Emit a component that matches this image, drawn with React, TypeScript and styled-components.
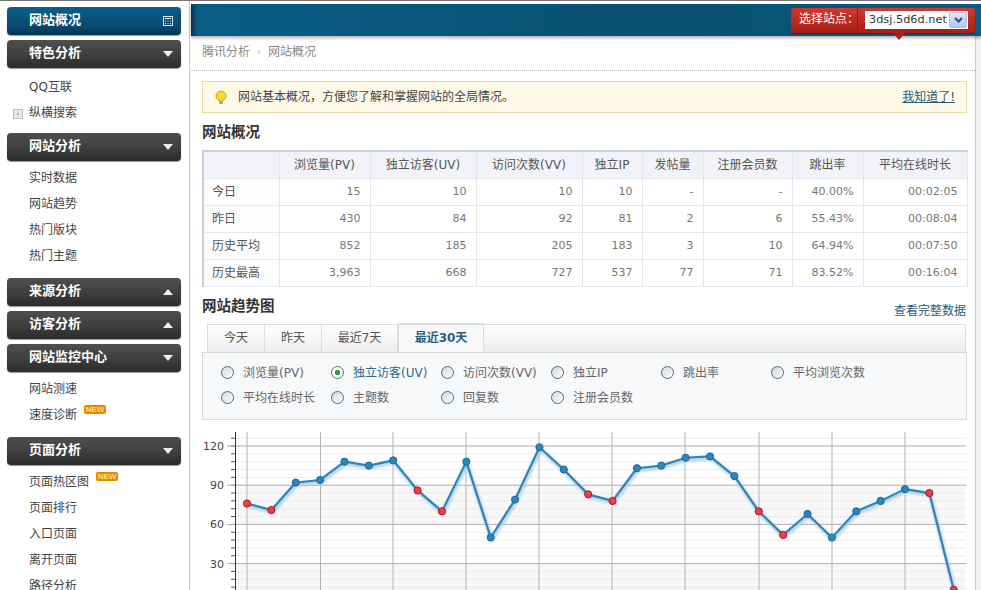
import React from "react";
import styled, { createGlobalStyle } from "styled-components";

const Global = createGlobalStyle`
  html, body { margin: 0; padding: 0; background: #fff; }
  body { font: 12px "DejaVu Sans", "Noto Sans CJK SC", sans-serif; color: #555; }
  * { box-sizing: border-box; }
`;

const Page = styled.div`
  width: 981px; height: 590px; overflow: hidden; display: flex;
  border-top: 1px solid #777;
`;
const Sidebar = styled.aside`
  width: 190px; flex: none; padding: 6px 8px 0 7px; border-right: 1px solid #ccc;
`;
const MenuButton = styled.div<{ $blue?: boolean; $gap?: number }>`
  height: 28px; display: flex; align-items: center; justify-content: space-between;
  padding: 0 8px 5px 22px; margin-bottom: ${p => p.$gap ?? 0}px; border-radius: 4px;
  color: #fff; font-size: 13px; font-weight: 700;
  background: ${p => p.$blue
    ? "linear-gradient(#0a5f8c, #074a70 70%, #03304f)"
    : "linear-gradient(#4f4f4f, #3c3c3c 60%, #2a2a2a)"};
  box-shadow: 0 1px 1px #999;
  & > svg { margin-top: 5px; }
`;
const MenuList = styled.div<{ $tight?: boolean }>`
  padding: ${p => (p.$tight ? "5px 0 8px" : "3px 0 10px")};
`;
const MenuItem = styled.div`
  position: relative; height: 26px; display: flex; align-items: center; gap: 7px;
  padding: 0 0 2px 22px; color: #444; font-size: 12px;
`;
const Expander = styled.svg`
  position: absolute; left: 6px; top: 10px; width: 10px; height: 10px;
`;
const NewBadge = styled.span`
  height: 9px; width: 22px; text-align: center; margin-top: -7px; border-radius: 2px; background: #e58a00;
  color: #ffe27a; font: 700 8px/9px "Liberation Sans", sans-serif;
`;
const Main = styled.main`
  flex: 1; min-width: 0; display: flex; flex-direction: column; padding-top: 3px;
`;
const TopBar = styled.header`
  height: 32px; flex: none; margin-left: 1px; padding: 4px 6px 0 0; display: flex;
  justify-content: flex-end; align-items: flex-start;
  background: linear-gradient(90deg, #0b3c58 0, #0a5d88 6px, #07506f 60%, #0a5c86 100%);
  border-left: 1px solid #223;
  box-shadow: 0 2px 3px rgba(0, 0, 0, .3);
  position: relative; z-index: 1;
`;
const SitePicker = styled.div`
  position: relative; width: 184px; height: 25px; display: flex; align-items: center;
  border-radius: 3px; background: linear-gradient(#cf3a2e, #a81d14); color: #fff;
  box-shadow: 0 1px 1px rgba(0, 0, 0, .4); padding-bottom: 2px;
  &::after {
    content: ""; position: absolute; left: 102px; bottom: -7px;
    border: 6px solid transparent; border-bottom: 0; border-top: 7px solid #a81d14;
  }
`;
const PickerLabel = styled.span`
  width: 67px; padding-left: 8px; height: 25px; line-height: 23px; border-right: 1px solid #8f1a12;
  margin-top: 2px; white-space: nowrap;
`;
const PickerSelect = styled.div`
  margin-left: 7px; width: 103px; height: 18px; background: #fff; display: flex;
  align-items: center; justify-content: space-between; color: #333; padding: 0 1px 0 4px;
  font-size: 11.3px;
`;
const PickerArrow = styled.span`
  width: 18px; height: 16px; flex: none; display: flex; align-items: center; justify-content: center;
  background: linear-gradient(#dfe8fb, #b4c6ef); border-radius: 2px; border: 1px solid #a9bce6;
`;
const Body = styled.div`
  flex: 1; min-height: 0; display: flex;
`;
const Content = styled.div`
  flex: 1; min-width: 0; overflow: hidden; padding-left: 1px;
`;
const Rail = styled.div`
  width: 6px; flex: none; background: #f0f0f0; border-left: 1px solid #ccc;
`;
const Crumbs = styled.div`
  height: 35px; padding: 0 0 6px 11px; display: flex; align-items: center;
  gap: 7px; color: #888; border-bottom: 1px dotted #bbb;
`;
const Chevron = styled.span`
  color: #bbb; font-size: 10px; margin-top: 2px;
`;
const Notice = styled.div`
  margin: 10px 8px 0 11px; height: 32px; display: flex; align-items: center;
  background: #fff9e8; border: 1px solid #e8dba4; padding: 0 11px 3px 11px; color: #444;
`;
const Bulb = styled.svg`
  width: 14px; height: 16px; margin: 5px 10px 0 0; flex: none;
`;
const NoticeText = styled.span` flex: 1; `;
const TextLink = styled.a`
  color: #2a5a78; text-decoration: underline; font-size: 12px;
`;
const Heading = styled.h2`
  margin: 0; font-size: 14.5px; font-weight: 700; color: #333; line-height: 20px;
`;
const OverviewHeading = styled(Heading)`
  margin-top: 9px;
`;
const Section = styled.section`
  margin: 0 8px 0 11px;
`;
const StatsTable = styled.table`
  width: 765px; table-layout: fixed; border-collapse: collapse; margin-top: 8px;
  border: 1px solid #e0e4ec; border-top: 2px solid #c6cfdf; border-left: 2px solid #c6cfdf;
`;
const HeadCell = styled.th`
  height: 27px; padding: 0 0 2px; background: #f1f3f8; border: 1px solid #e2e6ee; font-weight: 400;
  color: #555; font-size: 12px; text-align: center;
`;
const RowLabel = styled.td`
  height: 27px; padding: 0 0 3px 8px; border: 1px solid #e2e6ee; color: #555; background: #fcfcfd;
`;
const NumCell = styled.td`
  padding: 0 9px 0 0; border: 1px solid #e2e6ee; color: #777; text-align: right; font-size: 11px;
`;
const TrendHead = styled.div`
  margin-top: 9px; height: 28px; display: flex; justify-content: space-between; align-items: flex-start;
`;
const PlainLink = styled.a`
  color: #2a5a78; margin: 5px 1px 0 0;
`;
const TabBar = styled.div`
  margin: 0 1px 0 5px; height: 28px; display: flex; border: 1px solid #ddd; border-bottom: 0;
  background: linear-gradient(#fff, #ececec); position: relative;
`;
const Tab = styled.div<{ $active?: boolean; $w: number }>`
  width: ${p => p.$w}px; display: flex; align-items: center; justify-content: center; padding-bottom: 4px;
  border-right: 1px solid #ddd; color: ${p => (p.$active ? "#2a5f80" : "#555")};
  font-weight: ${p => (p.$active ? 700 : 400)};
  background: ${p => (p.$active ? "#f7f8fa" : "linear-gradient(#fff, #ededed)")};
  ${p => p.$active && "height: 29px; margin-top: -2px; border-top: 2px solid #ddd; border-left: 1px solid #ddd; position: relative; z-index: 1;"}
`;
const OptionPanel = styled.div`
  height: 68px; padding: 6px 0 0 18px; background: #f7f8fa; border: 1px solid #d8d8d8;
  display: grid; grid-template-columns: repeat(6, 110px); grid-auto-rows: 25px;
`;
const Option = styled.label<{ $on?: boolean }>`
  display: flex; align-items: center; gap: 9px; white-space: nowrap;
  color: ${p => (p.$on ? "#2a6a8a" : "#666")};
`;
const Radio = styled.span<{ $on?: boolean }>`
  width: 13px; height: 13px; flex: none; border-radius: 50%; border: 1.5px solid #4b6d82; margin-top: 2px;
  background: ${p => p.$on
    ? "radial-gradient(circle, #2f9e3a 0 2.5px, #fff 3px)"
    : "linear-gradient(135deg, #cfd6dc, #fff)"};
`;
const ChartSvg = styled.svg`
  display: block; margin: 11px 0 0 -1px; width: 785px; height: 160px;
`;

const groups = {
  special: ["QQ互联", "纵横搜索"],
  site: ["实时数据", "网站趋势", "热门版块", "热门主题"],
  monitor: ["网站测速", "速度诊断"],
  page: ["页面热区图", "页面排行", "入口页面", "离开页面", "路径分析"],
};

const Arrow = ({ up }: { up?: boolean }) => (
  <svg width="10" height="6" viewBox="0 0 10 6">
    <polygon points={up ? "5,0 10,6 0,6" : "0,0 10,0 5,6"} fill="#eee" />
  </svg>
);

const Head = ["", "浏览量(PV)", "独立访客(UV)", "访问次数(VV)", "独立IP", "发帖量", "注册会员数", "跳出率", "平均在线时长"];
const Widths = [76, 91, 106, 106, 60, 61, 89, 71, 104];
const Rows = [
  ["今日", "15", "10", "10", "10", "-", "-", "40.00%", "00:02:05"],
  ["昨日", "430", "84", "92", "81", "2", "6", "55.43%", "00:08:04"],
  ["历史平均", "852", "185", "205", "183", "3", "10", "64.94%", "00:07:50"],
  ["历史最高", "3,963", "668", "727", "537", "77", "71", "83.52%", "00:16:04"],
];
const Options = ["浏览量(PV)", "独立访客(UV)", "访问次数(VV)", "独立IP", "跳出率", "平均浏览次数", "平均在线时长", "主题数", "回复数", "注册会员数"];

const data = [76, 71, 92, 94, 108, 105, 109, 86, 70, 108, 50, 79, 119, 102, 83, 78, 103, 105, 111, 112, 97, 70, 52, 68, 50, 70, 78, 87, 84, 10];
const redIdx = new Set([0, 1, 7, 8, 14, 15, 21, 22, 28, 29]);
// chart space: page x - 190, page y - 430
const px = (i: number) => 57 + i * 24.37;
const py = (v: number) => 15 + (120 - v) * 1.307;
const linePts = data.map((v, i) => `${px(i)},${py(v)}`).join(" ");

const Chart = () => {
  const minors: number[] = [];
  for (let y = 15 - 7.84; y < 160; y += 7.84) minors.push(y);
  const majors = [120, 90, 60, 30];
  const grid = [57, 130.5, 203, 276, 349, 422, 495, 569, 642, 715];
  return (
    <ChartSvg viewBox="0 0 785 160">
      <defs>
        <filter id="glow" x="-5%" y="-5%" width="110%" height="110%">
          <feGaussianBlur stdDeviation="1.5" />
        </filter>
      </defs>
      <rect x="45" y="54" width="731" height="39.5" fill="#f8f8f8" />
      <rect x="45" y="132.5" width="731" height="28" fill="#f8f8f8" />
      {minors.map((y, i) => (
        <g key={i}>
          <line x1="45" x2="776" y1={y} y2={y} stroke="#ececec" />
          <line x1="41" x2="45" y1={y} y2={y} stroke="#555" />
        </g>
      ))}
      {majors.map(v => (
        <g key={v}>
          <line x1="37" x2="776" y1={py(v)} y2={py(v)} stroke="#b4b4b4" />
          <text x="34" y={py(v) + 4} textAnchor="end" fontSize="11" fill="#444" fontFamily="'DejaVu Sans', sans-serif">{v}</text>
        </g>
      ))}
      {grid.map(x => <line key={x} x1={x} x2={x} y1="1" y2="160" stroke="#b4b4b4" />)}
      <line x1="45.5" x2="45.5" y1="1" y2="160" stroke="#333" />
      <polyline points={linePts} fill="none" stroke="#9cc8e6" strokeWidth="3" filter="url(#glow)" transform="translate(1,2)" />
      <polyline points={linePts} fill="none" stroke="#3283b5" strokeWidth="2.2" strokeLinejoin="round" />
      {data.map((v, i) => (
        <circle key={i} cx={px(i)} cy={py(v)} r="3.6"
          fill={redIdx.has(i) ? "#ef3d48" : "#2b85c0"}
          stroke={redIdx.has(i) ? "#a51b22" : "#1f6a9c"} />
      ))}
    </ChartSvg>
  );
};

export default function App() {
  return (
    <Page>
      <Global />
      <Sidebar>
        <MenuButton $blue $gap={5}>
          网站概况
          <svg width="10" height="10" viewBox="0 0 10 10" fill="none" stroke="#dfe8ee">
            <rect x=".5" y=".5" width="9" height="9" />
            <path d="M2 2.5h6M2 5h1M4.5 5h1M7 5h1M2 7.5h1M4.5 7.5h1M7 7.5h1" />
          </svg>
        </MenuButton>
        <MenuButton>特色分析<Arrow /></MenuButton>
        <MenuList $tight>
          <MenuItem>{groups.special[0]}</MenuItem>
          <MenuItem>
            <Expander viewBox="0 0 10 10" fill="none" stroke="#bbb">
              <rect x=".5" y=".5" width="9" height="9" fill="#eee" />
              <path d="M2 5h6M5 2v6" />
            </Expander>
            {groups.special[1]}
          </MenuItem>
        </MenuList>
        <MenuButton>网站分析<Arrow /></MenuButton>
        <MenuList>{groups.site.map(t => <MenuItem key={t}>{t}</MenuItem>)}</MenuList>
        <MenuButton $gap={5}>来源分析<Arrow up /></MenuButton>
        <MenuButton $gap={5}>访客分析<Arrow up /></MenuButton>
        <MenuButton>网站监控中心<Arrow /></MenuButton>
        <MenuList>
          {groups.monitor.map((t, i) => (
            <MenuItem key={t}>{t}{i === 1 && <NewBadge>NEW</NewBadge>}</MenuItem>
          ))}
        </MenuList>
        <MenuButton>页面分析<Arrow /></MenuButton>
        <MenuList>
          {groups.page.map((t, i) => (
            <MenuItem key={t}>{t}{i === 0 && <NewBadge>NEW</NewBadge>}</MenuItem>
          ))}
        </MenuList>
      </Sidebar>
      <Main>
        <TopBar>
          <SitePicker>
            <PickerLabel>选择站点：</PickerLabel>
            <PickerSelect>
              3dsj.5d6d.net
              <PickerArrow>
                <svg width="9" height="6" viewBox="0 0 9 6" fill="none" stroke="#2a4a8a" strokeWidth="2">
                  <path d="M1 1l3.5 3.5L8 1" />
                </svg>
              </PickerArrow>
            </PickerSelect>
          </SitePicker>
        </TopBar>
        <Body>
          <Content>
            <Crumbs>腾讯分析<Chevron>›</Chevron>网站概况</Crumbs>
            <Notice>
              <Bulb viewBox="0 0 14 16">
                <circle cx="7" cy="6" r="5" fill="#ffd92e" stroke="#d9a900" />
                <rect x="5" y="11" width="4" height="3" fill="#aaa" />
              </Bulb>
              <NoticeText>网站基本概况，方便您了解和掌握网站的全局情况。</NoticeText>
              <TextLink>我知道了!</TextLink>
            </Notice>
            <Section>
              <OverviewHeading>网站概况</OverviewHeading>
              <StatsTable>
                <colgroup>{Widths.map((w, i) => <col key={i} width={w} />)}</colgroup>
                <thead>
                  <tr>{Head.map((h, i) => <HeadCell key={i}>{h}</HeadCell>)}</tr>
                </thead>
                <tbody>
                  {Rows.map(r => (
                    <tr key={r[0]}>
                      <RowLabel>{r[0]}</RowLabel>
                      {r.slice(1).map((c, i) => <NumCell key={i}>{c}</NumCell>)}
                    </tr>
                  ))}
                </tbody>
              </StatsTable>
              <TrendHead>
                <Heading>网站趋势图</Heading>
                <PlainLink>查看完整数据</PlainLink>
              </TrendHead>
              <TabBar>
                <Tab $w={57}>今天</Tab>
                <Tab $w={57}>昨天</Tab>
                <Tab $w={76}>最近7天</Tab>
                <Tab $w={86} $active>最近30天</Tab>
              </TabBar>
              <OptionPanel>
                {Options.map((o, i) => (
                  <Option key={o} $on={i === 1}><Radio $on={i === 1} />{o}</Option>
                ))}
              </OptionPanel>
            </Section>
            <Chart />
          </Content>
          <Rail />
        </Body>
      </Main>
    </Page>
  );
}
